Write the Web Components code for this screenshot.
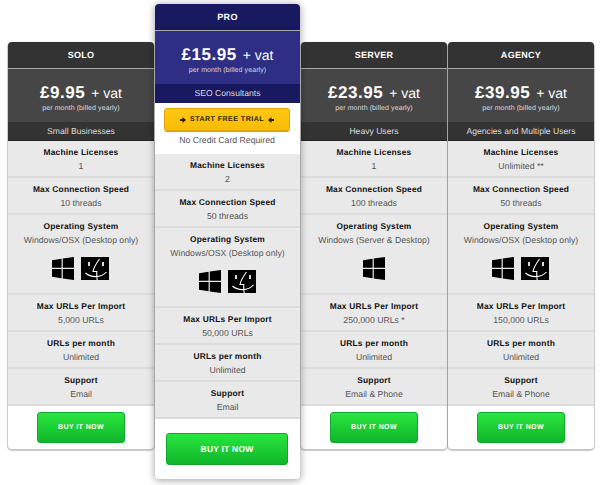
<!DOCTYPE html>
<html>
<head>
<meta charset="utf-8">
<title>Pricing</title>
<style>
	html, body { margin: 0; background: #fff; }
	body { font-family: "Liberation Sans", Arial, sans-serif; text-rendering: geometricPrecision; width: 600px; height: 485px; overflow: hidden; }
</style>
</head>
<body>
<pricing-table>
	<plan-card name="SOLO" price="£9.95" audience="Small Businesses">
		<plan-row title="Machine Licenses">1</plan-row>
		<plan-row title="Max Connection Speed">10 threads</plan-row>
		<plan-row title="Operating System" tall>Windows/OSX (Desktop only)<os-icons slot="extra" windows finder></os-icons></plan-row>
		<plan-row title="Max URLs Per Import">5,000 URLs</plan-row>
		<plan-row title="URLs per month">Unlimited</plan-row>
		<plan-row title="Support">Email</plan-row>
		<plan-button slot="footer">BUY IT NOW</plan-button>
	</plan-card>
	<plan-card name="PRO" price="£15.95" audience="SEO Consultants" featured>
		<plan-button slot="trial" kind="trial"><arrow-icon></arrow-icon>START FREE TRIAL<arrow-icon left></arrow-icon></plan-button>
		<span slot="note">No Credit Card Required</span>
		<plan-row title="Machine Licenses">2</plan-row>
		<plan-row title="Max Connection Speed">50 threads</plan-row>
		<plan-row title="Operating System" tall>Windows/OSX (Desktop only)<os-icons slot="extra" windows finder></os-icons></plan-row>
		<plan-row title="Max URLs Per Import">50,000 URLs</plan-row>
		<plan-row title="URLs per month">Unlimited</plan-row>
		<plan-row title="Support">Email</plan-row>
		<plan-button slot="footer" kind="large">BUY IT NOW</plan-button>
	</plan-card>
	<plan-card name="SERVER" price="£23.95" audience="Heavy Users">
		<plan-row title="Machine Licenses">1</plan-row>
		<plan-row title="Max Connection Speed">100 threads</plan-row>
		<plan-row title="Operating System" tall>Windows (Server &amp; Desktop)<os-icons slot="extra" windows></os-icons></plan-row>
		<plan-row title="Max URLs Per Import">250,000 URLs *</plan-row>
		<plan-row title="URLs per month">Unlimited</plan-row>
		<plan-row title="Support">Email &amp; Phone</plan-row>
		<plan-button slot="footer">BUY IT NOW</plan-button>
	</plan-card>
	<plan-card name="AGENCY" price="£39.95" audience="Agencies and Multiple Users">
		<plan-row title="Machine Licenses">Unlimited **</plan-row>
		<plan-row title="Max Connection Speed">50 threads</plan-row>
		<plan-row title="Operating System" tall>Windows/OSX (Desktop only)<os-icons slot="extra" windows finder></os-icons></plan-row>
		<plan-row title="Max URLs Per Import">150,000 URLs</plan-row>
		<plan-row title="URLs per month">Unlimited</plan-row>
		<plan-row title="Support">Email &amp; Phone</plan-row>
		<plan-button slot="footer">BUY IT NOW</plan-button>
	</plan-card>
</pricing-table>

<script>
//////////////////////////////////////////// pricing-table ///////////////////////////////////////////
class PricingTable extends HTMLElement {
	constructor(...args) {
		super(...args);
		this.attachShadow({ mode: 'open' }).innerHTML = `
<style>
	:host {
		display: flex;
		align-items: flex-start;
		gap: 1px;
		padding: 4px 6px 0 8px;
	}
</style>
<slot></slot>`;
	}
}
customElements.define("pricing-table", PricingTable);

////////////////////////////////////////////// plan-card /////////////////////////////////////////////
class PlanCard extends HTMLElement {
	constructor(...args) {
		super(...args);
		this.attachShadow({ mode: 'open' }).innerHTML = `
<style>
	:host {
		display: block;
		flex: 0 0 146px;
		margin-top: 38px;
		background: #fff;
		border-radius: 4px;
		box-shadow: 0 1px 1px 1px rgba(0,0,0,.22);
		--head: #333333;
		--price: #464646;
		--band: #333333;
		--band-line: #222222;
	}
	:host([featured]) {
		flex-basis: 145px;
		margin-top: 0;
		position: relative;
		z-index: 2;
		border-radius: 4px;
		box-shadow: 0 1px 7px 1px rgba(0,0,0,.32);
		--head: #19195f;
		--price: #2e2e85;
		--band: #19195f;
		--band-line: #19195f;
	}
	header {
		height: 26px;
		line-height: 26px;
		border-radius: 4px 4px 0 0;
		background: var(--head);
		border-bottom: 1px solid #a6a6a6;
		color: #fff;
		font-size: 9px;
		font-weight: bold;
		letter-spacing: .3px;
		text-align: center;
	}
	.price {
		height: 53px;
		box-sizing: border-box;
		padding-top: 12px;
		background: var(--price);
		color: #fff;
		text-align: center;
	}
	.amount { font-size: 14px; line-height: 23px; white-space: nowrap; }
	.amount b { font-size: 17px; letter-spacing: .55px; margin-right: 2px; }
	.period { font-size: 7px; line-height: 8px; color: #ddd; letter-spacing: .1px; }
	.band {
		height: 18px;
		line-height: 18px;
		background: var(--band);
		border-bottom: 1px solid var(--band-line);
		color: #ddd;
		font-size: 8.6px;
		text-align: center;
		white-space: nowrap;
	}
	.trial { display: none; }
	:host([featured]) .trial {
		display: block;
		height: 51px;
		box-sizing: border-box;
		padding: 5px 1px 0 0;
		text-align: center;
		font-size: 8.7px;
		color: #555;
	}
	.trial .note { display: block; margin-top: 3px; line-height: 12px; }
	footer {
		display: flex;
		justify-content: center;
		padding: 6px 0 6px;
	}
	:host([featured]) footer { padding: 14px 1px 14px 0; }
</style>
<header></header>
<div class="price">
	<div class="amount"><b></b> + vat</div>
	<div class="period">per month (billed yearly)</div>
</div>
<div class="band"></div>
<div class="trial"><slot name="trial"></slot><span class="note"><slot name="note"></slot></span></div>
<slot></slot>
<footer><slot name="footer"></slot></footer>`;
	}

	connectedCallback() {
		const root = this.shadowRoot;
		root.querySelector("header").textContent = this.getAttribute("name");
		root.querySelector(".amount b").textContent = this.getAttribute("price");
		root.querySelector(".band").textContent = this.getAttribute("audience");
	}
}
customElements.define("plan-card", PlanCard);

////////////////////////////////////////////// plan-row //////////////////////////////////////////////
class PlanRow extends HTMLElement {
	constructor(...args) {
		super(...args);
		this.attachShadow({ mode: 'open' }).innerHTML = `
<style>
	:host {
		display: block;
		height: 37px;
		box-sizing: border-box;
		padding-top: 5px;
		background: #e9e9e9;
		border-bottom: 2px solid #dcdcdc;
		text-align: center;
		color: #555;
		font-size: 8.7px;
		line-height: 13px;
		white-space: nowrap;
	}
	:host([tall]) { height: 80px; }
	.title { color: #111; font-weight: bold; font-size: 8.4px; letter-spacing: .2px; margin-bottom: 1px; }
</style>
<div class="title"></div>
<slot></slot>
<slot name="extra"></slot>`;
	}

	connectedCallback() {
		this.shadowRoot.querySelector(".title").textContent = this.getAttribute("title");
	}
}
customElements.define("plan-row", PlanRow);

////////////////////////////////////////////// os-icons //////////////////////////////////////////////
class OsIcons extends HTMLElement {
	constructor(...args) {
		super(...args);
		const win = `<svg width="22" height="23" viewBox="0 0 22 23"><path fill="#000" d="M0 3.2 9.6 1.8V10.8H0ZM10.8 1.6 22 0V10.8H10.8ZM0 12H9.6V21.2L0 19.8ZM10.8 12H22V23L10.8 21.4Z"/></svg>`;
		const finder = `<svg width="28" height="23" viewBox="0 0 28 23"><rect width="28" height="23" fill="#000"/><path fill="none" stroke="#fff" stroke-width="1.1" d="M18.5 2C15.5 6 13 10 12 14.5H15.8C15.6 17 15.8 20 16.2 23M4.5 16C10 21 20 21 25.5 15"/><path fill="none" stroke="#fff" stroke-width="1.7" d="M8 5V9M22 5V9"/></svg>`;
		this.attachShadow({ mode: 'open' }).innerHTML = `
<style>
	:host {
		display: flex;
		justify-content: center;
		gap: 7px;
		margin-top: 10px;
	}
	:host([finder]) { padding-right: 1px; }
	svg { display: block; }
</style>
${this.hasAttribute("windows") ? win : ""}${this.hasAttribute("finder") ? finder : ""}`;
	}
}
customElements.define("os-icons", OsIcons);

///////////////////////////////////////////// arrow-icon /////////////////////////////////////////////
class ArrowIcon extends HTMLElement {
	constructor(...args) {
		super(...args);
		this.attachShadow({ mode: 'open' }).innerHTML = `
<style>
	:host { display: inline-block; width: 6px; height: 6px; margin: 0 4px; }
	:host([left]) svg { transform: scaleX(-1); }
	svg { display: block; }
</style>
<svg width="6" height="6" viewBox="0 0 7 7"><path fill="#2b1d00" d="M0 2.3H3V0L7 3.5 3 7V4.7H0Z"/></svg>`;
	}
}
customElements.define("arrow-icon", ArrowIcon);

///////////////////////////////////////////// plan-button ////////////////////////////////////////////
class PlanButton extends HTMLElement {
	constructor(...args) {
		super(...args);
		this.attachShadow({ mode: 'open' }).innerHTML = `
<style>
	:host {
		display: inline-flex;
		align-items: center;
		justify-content: center;
		box-sizing: border-box;
		width: 88px;
		height: 31px;
		border-radius: 3px;
		border: 1px solid #10a82a;
		background: linear-gradient(#2ae63f, #10b52a);
		color: #fff;
		font-size: 7px;
		font-weight: bold;
		letter-spacing: .4px;
		white-space: nowrap;
	}
	:host([kind="large"]) {
		width: 122px;
		height: 32px;
		font-size: 8.5px;
		letter-spacing: .2px;
	}
	:host([kind="trial"]) {
		width: 126px;
		height: 23px;
		border: 1px solid #e0a60c;
		background: linear-gradient(#fdc80f, #f8bb08);
		box-shadow: 0 1px 0 #d8a40e;
		color: #2b1d00;
		letter-spacing: .5px;
	}
</style>
<slot></slot>`;
	}
}
customElements.define("plan-button", PlanButton);
</script>
</body>
</html>
